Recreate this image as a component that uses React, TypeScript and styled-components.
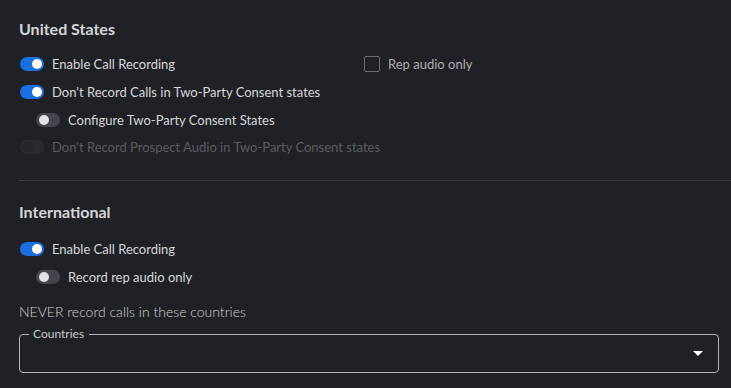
import React from "react";
import styled, { createGlobalStyle } from "styled-components";

const Global = createGlobalStyle`
  html, body { margin: 0; padding: 0; background: #202126; }
  body { font-family: Lato, "Open Sans", sans-serif; -webkit-font-smoothing: antialiased; }
`;

const Page = styled.div`
  width: 731px;
  height: 388px;
  overflow: hidden;
  background: #202126;
  padding: 19px 0 0 19px;
  box-sizing: border-box;
`;

const Heading = styled.h2<{ $mb?: number }>`
  margin: 0 0 ${(p) => p.$mb ?? 11}px 0;
  height: 20px;
  line-height: 20px;
  font-size: 16px;
  font-weight: 700;
  color: #d4d5d7;
`;

const Row = styled.div<{ $indent?: boolean; $h?: number }>`
  display: flex;
  align-items: center;
  height: ${(p) => p.$h ?? 28}px;
  padding-left: ${(p) => (p.$indent ? 17 : 1)}px;
`;

const ToggleGroup = styled.div<{ $width?: number }>`
  display: flex;
  align-items: center;
  gap: 8px;
  width: ${(p) => (p.$width ? `${p.$width}px` : "auto")};
`;

const Track = styled.span<{ $on?: boolean; $disabled?: boolean }>`
  position: relative;
  display: inline-block;
  width: 24px;
  height: 14px;
  border-radius: 7px;
  flex: none;
  background: ${(p) => (p.$disabled ? "#2a2b30" : p.$on ? "#1a6fe0" : "#44464d")};
`;

const Knob = styled.span<{ $on?: boolean; $disabled?: boolean }>`
  position: absolute;
  top: 2px;
  left: ${(p) => (p.$on ? 12 : 3)}px;
  width: 10px;
  height: 10px;
  border-radius: 50%;
  background: ${(p) => (p.$disabled ? "#25262a" : p.$on ? "#ffffff" : "#e2e2e4")};
`;

const Label = styled.span<{ $disabled?: boolean }>`
  font-size: 13px;
  line-height: 16px;
  color: ${(p) => (p.$disabled ? "#5b5c61" : "#d6d7d9")};
  white-space: nowrap;
`;

const CheckGroup = styled.label`
  display: flex;
  align-items: center;
  gap: 8px;
`;

const Box = styled.span`
  width: 14px;
  height: 14px;
  border: 1px solid #6c6d72;
  border-radius: 2px;
  flex: none;
`;

const CheckLabel = styled.span`
  font-size: 13px;
  color: #acadb1;
`;

const Divider = styled.hr`
  margin: 19px 0 21px 0;
  border: none;
  height: 1px;
  background: #3a3b40;
`;

const Note = styled.p`
  margin: 13px 0 7px 0;
  font-size: 14px;
  font-weight: 300;
  line-height: 18px;
  color: #d0d1d3;
`;

const Field = styled.fieldset`
  margin: 0 12px 0 0;
  padding: 0 8px 0 9px;
  border: 1px solid #b4b5b8;
  border-radius: 4px;
  height: 45px;
  box-sizing: border-box;
  display: flex;
  align-items: center;
  justify-content: flex-end;
`;

const Legend = styled.legend`
  padding: 0 5px 0 4px;
  margin-left: 0;
  font-size: 12px;
  line-height: 12px;
  color: #c8c9cc;
`;

const Arrow = styled.svg`
  width: 24px;
  height: 24px;
  margin-top: -6px;
  fill: #ffffff;
`;

function Toggle({ on, disabled, label }: { on?: boolean; disabled?: boolean; label: string }) {
  return (
    <ToggleGroup>
      <Track $on={on} $disabled={disabled}>
        <Knob $on={on} $disabled={disabled} />
      </Track>
      <Label $disabled={disabled}>{label}</Label>
    </ToggleGroup>
  );
}

export default function App() {
  return (
    <>
      <Global />
      <Page>
        <Heading>United States</Heading>
        <Row>
          <ToggleGroup $width={344}>
            <Track $on>
              <Knob $on />
            </Track>
            <Label>Enable Call Recording</Label>
          </ToggleGroup>
          <CheckGroup>
            <Box />
            <CheckLabel>Rep audio only</CheckLabel>
          </CheckGroup>
        </Row>
        <Row>
          <Toggle on label="Don't Record Calls in Two-Party Consent states" />
        </Row>
        <Row $indent $h={27}>
          <Toggle label="Configure Two-Party Consent States" />
        </Row>
        <Row>
          <Toggle disabled label="Don't Record Prospect Audio in Two-Party Consent states" />
        </Row>
        <Divider />
        <Heading $mb={13}>International</Heading>
        <Row>
          <Toggle on label="Enable Call Recording" />
        </Row>
        <Row $indent $h={27}>
          <Toggle label="Record rep audio only" />
        </Row>
        <Note>NEVER record calls in these countries</Note>
        <Field>
          <Legend>Countries</Legend>
          <Arrow viewBox="0 0 24 24">
            <path d="M7 10l5 5 5-5z" />
          </Arrow>
        </Field>
      </Page>
    </>
  );
}
